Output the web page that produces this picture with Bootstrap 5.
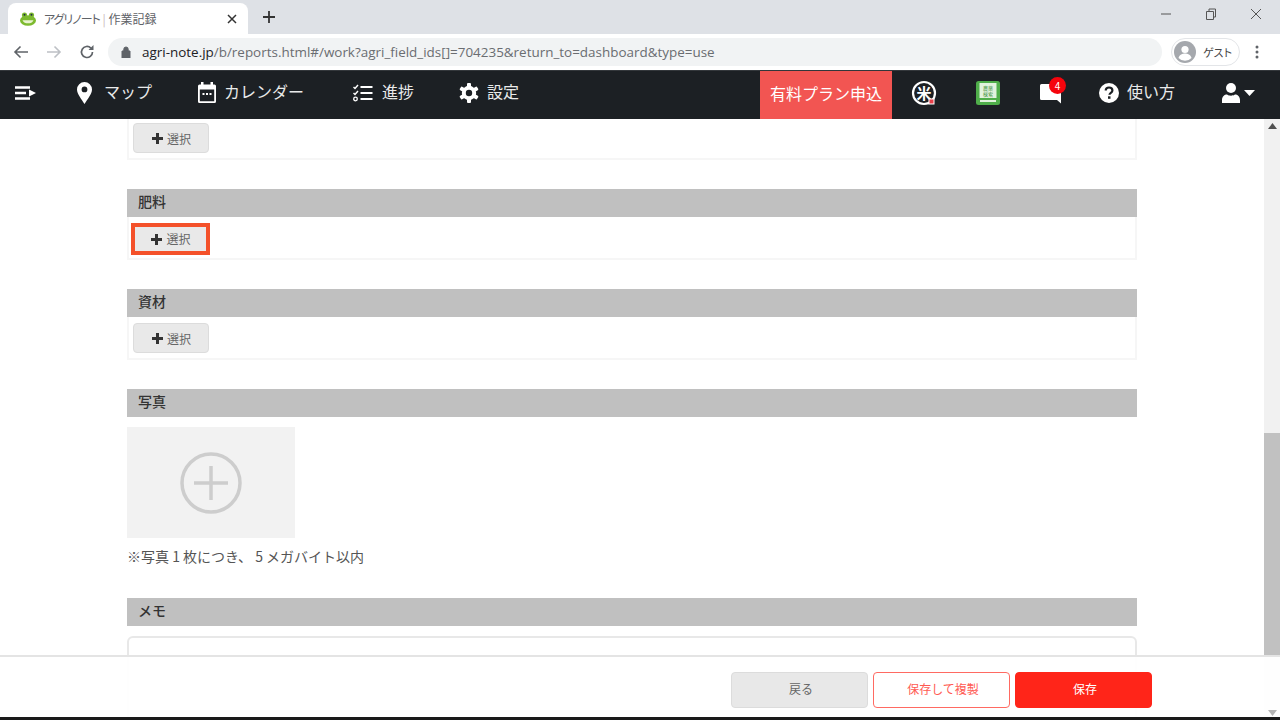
<!DOCTYPE html>
<html lang="ja">
<head>
<meta charset="utf-8">
<title>アグリノート | 作業記録</title>
<link href="https://cdn.jsdelivr.net/npm/bootstrap@5.3.0/dist/css/bootstrap.min.css" rel="stylesheet">
<style>
html,body{height:720px;overflow:hidden;margin:0}
body{font-family:"Noto Sans CJK JP","Liberation Sans",sans-serif;color:#333;background:#fff}
.page{height:720px}
/* browser chrome */
.tabstrip{height:34px;background:#dee1e6;padding-left:8px}
.tabitem{width:240px;height:31px;margin-top:3px;background:#fff;border-radius:8px 8px 0 0;padding:0 8px 0 12px;font-size:12px;color:#5f6368}
.tabtitle{margin-left:8px;width:181px;font-feature-settings:"palt"}
.tabkana{letter-spacing:-1px}
.tabsep{color:#c9b9b9}
.tabx{font-size:0;margin-left:2px}
.newtab{margin-left:14px}
.winctl{margin-left:auto;padding-right:16px;gap:29px;margin-top:-6px}
.toolbar{height:36px;background:#fff;padding:0 8px 0 13px}
.navicons{gap:17px;width:95px}
.urlbar{width:1054px;height:28px;border-radius:14px;background:#f1f3f4;padding-left:13px;font-family:"Open Sans","Liberation Sans",sans-serif;font-size:13.45px;color:#6a6d71;white-space:nowrap}
.urlbar b{font-weight:400;color:#202124}
.urltext{margin-left:11px}
.guest{margin-left:9px;width:69px;height:28px;border:1px solid #e3e5e8;border-radius:14px;padding-left:2px;font-size:11px;color:#444;gap:7px;font-feature-settings:"palt"}
.dots{margin-left:15px}
/* app navbar */
.appnav{height:49px;background:#1c2024;border-top:1px solid #33373b;color:#fff;font-size:16px;padding:0;flex-wrap:nowrap;justify-content:flex-start}
.appnav .navitem{color:#e9eaea;white-space:nowrap;margin-bottom:5px}
.navitem span:not(.chatbadge){margin-bottom:4px}
.n-menu{margin-left:15px}
.n-map{margin-left:41px;gap:12px}
.n-cal{margin-left:46px;gap:8px}
.n-prog{margin-left:49px;gap:9px}
.n-set{margin-left:45px;gap:8px}
.plan{margin-left:241px;width:132px;height:48px;background:#f25552;color:#fff;white-space:nowrap;font-size:16px;padding-bottom:5px}
.n-rice{margin-left:19px}
.n-book{margin-left:39px}
.n-chat{margin-left:40px;position:relative}
.chatbadge{position:absolute;top:-5px;left:9px;width:17px;height:17px;border-radius:50%;background:#f5040c;color:#fff;font-size:10px;line-height:17px;text-align:center}
.n-help{margin-left:38px;gap:8px}
.n-user{margin-left:47px;gap:4px}
/* content */
.mainarea{height:598px;position:relative;overflow:hidden}
.sheet{width:1264px;padding-left:127px}
.colwrap{width:1010px}
.sechead{height:28px;background:#c0c0c0;padding-left:11px;font-size:14px;font-weight:500;line-height:25px;color:#333;margin-top:29px}
.secbody{height:43px;border:solid #f6f6f6;border-width:0 2px 2px;padding:6px 0 0 4px}
.secfirst{height:41px;padding-top:4px}
.pickbtn{width:76px;height:30px;padding:1px 0 0 1px;background:#e9e9e9;border:1px solid #dcdcdc;border-radius:4px;font-size:12px;color:#666;gap:4px;--bs-btn-hover-bg:#e9e9e9}
.pickhot{width:79px;height:32px;padding:0 0 0 1px;margin:0 0 0 -2px;border:4px solid #f4512a;border-radius:0}
.phototile{width:168px;height:111px;background:#f2f2f2;margin-top:10px}
.photonote{font-size:14px;color:#555;margin:8px 0 0;line-height:20px}
.memohead{margin-top:32px}
.memobox{height:120px;margin-top:10px;border:2px solid #e8e8e8;border-radius:6px;background:#fff}
.scrolltrack{width:16px;height:598px;background:#f1f1f1;right:0;top:0}
.arrowbox{height:16px;padding-top:4px}
.scrollthumb{width:16px;height:224px;margin-top:298px;background:#c1c1c1}
.footerbar{position:absolute;left:0;right:0;bottom:0;height:62px;background:rgba(255,255,255,.92);border-top:2px solid #e4e4e4;padding:15px 128px 0 0;gap:5px}
.arrowdown{position:absolute;right:3px;bottom:1px}
.footbtn{width:137px;height:36px;padding:0 0 2px 3px;font-size:12px;border-radius:4px;line-height:32px}
.fb-back{background:#e8e8e8;border:1px solid #dcdcdc;color:#666;--bs-btn-hover-bg:#e8e8e8}
.fb-copy{background:#fff;border:1px solid #ff6a62;color:#ff5a52;--bs-btn-hover-bg:#fff}
.fb-save{background:#ff2519;border:1px solid #ff2519;color:#fff;--bs-btn-hover-bg:#ff2519}
.bottomline{height:3px;background:#1a1a1a}
</style>
</head>
<body>
<div class="page d-flex flex-column">
  <div class="tabstrip d-flex align-items-start flex-shrink-0">
    <div class="tabitem d-flex align-items-center">
      <svg width="16" height="14" viewBox="0 0 16 14"><circle cx="4.500" cy="3" r="2.600" fill="#7dba2f"/><circle cx="11.500" cy="3" r="2.600" fill="#7dba2f"/><ellipse cx="8" cy="8.500" rx="8" ry="5.200" fill="#7dba2f"/><circle cx="4.500" cy="2.800" r="1" fill="#234"/><circle cx="11.500" cy="2.800" r="1" fill="#234"/><path d="M2.500 8.200h11c-1 2.500-3 3-5.500 3s-4.500-.5-5.500-3z" fill="#e8f3d0"/></svg>
      <span class="tabtitle text-nowrap"><span class="tabkana">アグリノート</span> <span class="tabsep">|</span> 作業記録</span>
      <svg class="tabx" width="10" height="10" viewBox="0 0 10 10"><path d="M1 1l8 8M9 1l-8 8" stroke="#333" stroke-width="1.500"/></svg>
    </div>
    <svg class="newtab align-self-center" width="14" height="14" viewBox="0 0 14 14"><path d="M7 1v12M1 7h12" stroke="#333" stroke-width="1.800"/></svg>
    <div class="winctl d-flex align-items-center align-self-center">
      <svg width="16" height="12" viewBox="0 0 16 12"><path d="M3 6h10" stroke="#555" stroke-width="1"/></svg>
      <svg width="16" height="12" viewBox="0 0 16 12"><path d="M3.500 3.500h7v8h-7zM6 3.500V1h6.500v8h-2" fill="none" stroke="#555" stroke-width="1"/></svg>
      <svg width="16" height="12" viewBox="0 0 16 12"><path d="M3 1l10 10M13 1L3 11" stroke="#555" stroke-width="1"/></svg>
    </div>
  </div>
  <div class="toolbar d-flex align-items-center flex-shrink-0">
    <div class="navicons d-flex align-items-center">
      <svg width="16" height="16" viewBox="0 0 16 16"><path d="M15 8H2M7.500 2.500L2 8l5.500 5.500" fill="none" stroke="#5f6368" stroke-width="1.600"/></svg>
      <svg width="16" height="16" viewBox="0 0 16 16"><path d="M1 8h13M8.500 2.500L14 8l-5.500 5.500" fill="none" stroke="#bdc0c5" stroke-width="1.600"/></svg>
      <svg width="16" height="16" viewBox="0 0 16 16"><path d="M13.500 8a5.500 5.500 0 1 1-1.600-3.900" fill="none" stroke="#5f6368" stroke-width="1.700"/><path d="M14.500 1v5h-5z" fill="#5f6368"/></svg>
    </div>
    <div class="urlbar d-flex align-items-center">
      <svg width="10" height="12" viewBox="0 0 10 12"><path d="M1 5h8v7H1zM2.800 5V3.200a2.200 2.200 0 0 1 4.400 0V5" fill="#5f6368" stroke="#5f6368"/></svg>
      <span class="urltext"><b>agri-note.jp</b>/b/reports.html#/work?agri_field_ids[]=704235&amp;return_to=dashboard&amp;type=use</span>
    </div>
    <div class="guest d-flex align-items-center">
      <svg width="22" height="22" viewBox="0 0 22 22"><circle cx="11" cy="11" r="11" fill="#a5a8ad"/><circle cx="11" cy="8.500" r="3.600" fill="#fff"/><path d="M4.500 17c1-3.500 4-4.500 6.500-4.500s5.500 1 6.500 4.500a9 9 0 0 1-13 0z" fill="#fff"/></svg>
      <span>ゲスト</span>
    </div>
    <svg class="dots" width="4" height="14" viewBox="0 0 4 14"><circle cx="2" cy="2" r="1.500" fill="#5f6368"/><circle cx="2" cy="7" r="1.500" fill="#5f6368"/><circle cx="2" cy="12" r="1.500" fill="#5f6368"/></svg>
  </div>

  <nav class="navbar appnav d-flex align-items-center flex-shrink-0">
    <div class="navitem n-menu d-flex"><svg width="21" height="14" viewBox="0 0 21 14"><path d="M0 1.500h15M0 7h11M0 12.500h15" stroke="#fff" stroke-width="2.400"/><path d="M14 3.500L21 7l-7 3.500z" fill="#fff"/></svg></div>
    <div class="navitem n-map d-flex align-items-center"><svg width="15" height="22" viewBox="0 0 15 22"><path fill-rule="evenodd" d="M7.500 0A7.500 7.500 0 0 0 0 7.500C0 12 4.500 17 7.500 22 10.500 17 15 12 15 7.500A7.500 7.500 0 0 0 7.500 0zm0 10.300a2.900 2.900 0 1 1 0-5.800 2.900 2.900 0 0 1 0 5.800z" fill="#fff"/></svg><span>マップ</span></div>
    <div class="navitem n-cal d-flex align-items-center"><svg width="18" height="21" viewBox="0 0 18 21"><path fill-rule="evenodd" d="M3 0h2.500v2.500h7V0H15v2.500h1.500A1.500 1.500 0 0 1 18 4v15.500a1.500 1.500 0 0 1-1.500 1.500h-15A1.500 1.500 0 0 1 0 19.500V4a1.500 1.500 0 0 1 1.500-1.500H3zM1.800 7.500v11.700h14.400V7.500z" fill="#fff"/><path d="M4.500 11h2v2h-2zM8 11h2v2H8zM11.500 11h2v2h-2z" fill="#fff"/></svg><span>カレンダー</span></div>
    <div class="navitem n-prog d-flex align-items-center"><svg width="20" height="18" viewBox="0 0 20 18"><path d="M7.500 3h12M7.500 9h12M7.500 15h12" stroke="#fff" stroke-width="2.200"/><path d="M.5 3l1.500 1.500L5 1M.5 9L2 10.500 5 7" fill="none" stroke="#fff" stroke-width="1.500"/><circle cx="2.500" cy="15" r="1.800" fill="none" stroke="#fff" stroke-width="1.300"/></svg><span>進捗</span></div>
    <div class="navitem n-set d-flex align-items-center"><svg width="20" height="20" viewBox="0 0 20 20"><circle cx="10" cy="10" r="5.200" fill="none" stroke="#fff" stroke-width="4"/><g fill="#fff"><rect x="8" y="0" width="4" height="5" rx="1"/><rect x="8" y="15" width="4" height="5" rx="1"/><rect x="8" y="0" width="4" height="5" rx="1" transform="rotate(60 10 10)"/><rect x="8" y="15" width="4" height="5" rx="1" transform="rotate(60 10 10)"/><rect x="8" y="0" width="4" height="5" rx="1" transform="rotate(120 10 10)"/><rect x="8" y="15" width="4" height="5" rx="1" transform="rotate(120 10 10)"/></g></svg><span>設定</span></div>
    <div class="plan d-flex align-items-center justify-content-center">有料プラン申込</div>
    <div class="navitem n-rice d-flex"><svg width="26" height="26" viewBox="0 0 26 26"><circle cx="13" cy="13" r="11" fill="none" stroke="#fff" stroke-width="2.200"/><text x="13" y="18.500" font-size="15" font-weight="700" fill="#fff" text-anchor="middle" font-family="Noto Sans CJK JP">米</text><rect x="17.500" y="18.500" width="6" height="6" fill="#fff"/><rect x="18.500" y="19.500" width="4" height="4" fill="#e8404a"/></svg></div>
    <div class="navitem n-book d-flex"><svg width="24" height="24" viewBox="0 0 24 24"><rect width="24" height="24" rx="2.500" fill="#4fae4a"/><path d="M3.500 2h17v15h-17z" fill="#e2f2de"/><text x="12" y="9" font-size="5" fill="#3d8f3a" text-anchor="middle" font-family="Noto Sans CJK JP">農薬</text><text x="12" y="15" font-size="5" fill="#3d8f3a" text-anchor="middle" font-family="Noto Sans CJK JP">検索</text><rect x="4" y="19" width="16" height="2" fill="#e2f2de"/></svg></div>
    <div class="navitem n-chat d-flex"><svg width="21" height="22" viewBox="0 0 21 22"><path d="M1.500 2h18A1.500 1.500 0 0 1 21 3.500v14l0 4-4-3.500H1.500A1.500 1.500 0 0 1 0 16.500v-13A1.500 1.500 0 0 1 1.500 2z" fill="#fff"/></svg><span class="chatbadge">4</span></div>
    <div class="navitem n-help d-flex align-items-center"><svg width="20" height="20" viewBox="0 0 20 20"><circle cx="10" cy="10" r="10" fill="#fff"/><path d="M6.700 7.500C6.800 5.500 8.300 4.500 10 4.500c2 0 3.400 1.200 3.400 2.900 0 2.400-2.900 2.400-2.900 4.400" fill="none" stroke="#1c2024" stroke-width="2.200"/><rect x="9" y="13.300" width="2.500" height="2.500" fill="#1c2024"/></svg><span>使い方</span></div>
    <div class="navitem n-user d-flex align-items-center"><svg width="18" height="20" viewBox="0 0 18 20"><circle cx="9" cy="5" r="5" fill="#fff"/><path d="M0 20v-3c0-3.500 2.500-5.500 5-5.500 1 .8 2.500 1.200 4 1.200s3-.4 4-1.200c2.500 0 5 2 5 5.500v3z" fill="#fff"/></svg><svg width="11" height="6" viewBox="0 0 11 6"><path d="M0 0h11L5.500 6z" fill="#fff"/></svg></div>
  </nav>

  <main class="mainarea flex-shrink-0">
    <div class="sheet">
      <div class="colwrap">
        <div class="secbody secfirst"><button class="btn pickbtn d-inline-flex align-items-center justify-content-center" type="button"><svg width="11" height="11" viewBox="0 0 11 11"><path d="M5.500 0v11M0 5.500h11" stroke="#333" stroke-width="3"/></svg>選択</button></div>

        <div class="sechead">肥料</div>
        <div class="secbody"><button class="btn pickbtn pickhot d-inline-flex align-items-center justify-content-center" type="button"><svg width="11" height="11" viewBox="0 0 11 11"><path d="M5.500 0v11M0 5.500h11" stroke="#333" stroke-width="3"/></svg>選択</button></div>

        <div class="sechead">資材</div>
        <div class="secbody"><button class="btn pickbtn d-inline-flex align-items-center justify-content-center" type="button"><svg width="11" height="11" viewBox="0 0 11 11"><path d="M5.500 0v11M0 5.500h11" stroke="#333" stroke-width="3"/></svg>選択</button></div>

        <div class="sechead">写真</div>
        <div class="phototile d-flex align-items-center justify-content-center">
          <svg width="62" height="62" viewBox="0 0 62 62"><circle cx="31" cy="31" r="29" fill="none" stroke="#cdcdcd" stroke-width="3.500"/><path d="M31 14v34M14 31h34" stroke="#cdcdcd" stroke-width="3.500"/></svg>
        </div>
        <p class="photonote">※写真 1 枚につき、 5 メガバイト以内</p>

        <div class="sechead memohead">メモ</div>
        <div class="memobox"></div>
      </div>
    </div>

    <div class="scrolltrack position-absolute d-flex flex-column">
      <div class="arrowbox d-flex justify-content-center"><svg width="9" height="6" viewBox="0 0 9 6"><path d="M4.500 0L9 6H0z" fill="#505050"/></svg></div>
      <div class="scrollthumb"></div>
    </div>

    <div class="footerbar d-flex justify-content-end">
      <button class="btn footbtn fb-back" type="button">戻る</button>
      <button class="btn footbtn fb-copy" type="button">保存して複製</button>
      <button class="btn footbtn fb-save" type="button">保存</button>
      <svg class="arrowdown" width="9" height="6" viewBox="0 0 9 6"><path d="M0 0h9L4.500 6z" fill="#b5b5b5"/></svg>
    </div>
  </main>
  <div class="bottomline flex-shrink-0"></div>
</div>
</body>
</html>
